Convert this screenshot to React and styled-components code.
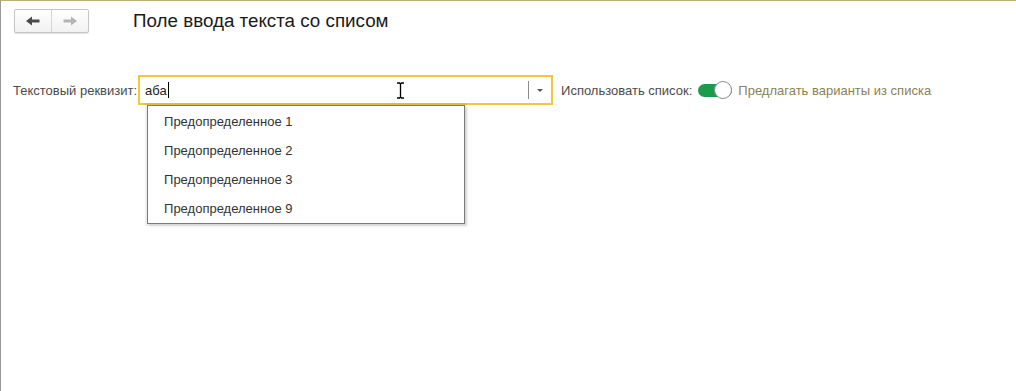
import React from "react";
import styled, { createGlobalStyle } from "styled-components";

const GlobalStyle = createGlobalStyle`
  html, body {
    margin: 0;
    padding: 0;
    background: #fff;
  }
  body {
    font-family: "Liberation Sans", Arial, sans-serif;
  }
`;

const items = [
  "Предопределенное 1",
  "Предопределенное 2",
  "Предопределенное 3",
  "Предопределенное 9",
];

const Arrow = ({ dir, color }) => (
  <svg width="14" height="10" viewBox="0 0 14 10">
    <g transform={dir === "right" ? "translate(14 0) scale(-1 1)" : undefined}>
      <path d="M0 5 L6 0.5 L6 3.5 L13.5 3.5 L13.5 6.5 L6 6.5 L6 9.5 Z" fill={color} />
    </g>
  </svg>
);

const IBeam = () => (
  <svg width="9" height="17" viewBox="0 0 9 17">
    <path
      d="M1 1 H3.5 L4.5 2 L5.5 1 H8 M4.5 2 V15 M1 16 H3.5 L4.5 15 L5.5 16 H8"
      fill="none"
      stroke="#000"
      strokeWidth="1.3"
    />
  </svg>
);

export default function App() {
  return (
    <>
      <GlobalStyle />
      <Page>
        <Header>
          <NavGroup>
            <NavButton>
              <Arrow dir="left" color="#4a4a4a" />
            </NavButton>
            <NavButton $divider>
              <Arrow dir="right" color="#b4b4b4" />
            </NavButton>
          </NavGroup>
          <Title>Поле ввода текста со списом</Title>
        </Header>

        <FormRow>
          <Label>Текстовый реквизит:</Label>
          <FieldWrap>
            <InputBox>
              <InputText>
                аба<Caret />
              </InputText>
              <DropButton>
                <DropTriangle />
              </DropButton>
            </InputBox>
            <Pointer>
              <IBeam />
            </Pointer>
            <DropList>
              {items.map((it) => (
                <DropItem key={it}>{it}</DropItem>
              ))}
            </DropList>
          </FieldWrap>
          <Label $gap>Использовать список:</Label>
          <Toggle>
            <Knob />
          </Toggle>
          <Hint>Предлагать варианты из списка</Hint>
        </FormRow>
      </Page>
    </>
  );
}

const Page = styled.div`
  height: 391px;
  box-sizing: border-box;
  border-top: 1px solid #bcb077;
  border-left: 1px solid #9a9a9a;
  overflow: hidden;
`;

const Header = styled.div`
  display: flex;
  align-items: center;
  padding: 8px 0 0 13px;
`;

const NavGroup = styled.div`
  display: flex;
  height: 22px;
  border: 1px solid #c6c6c6;
  border-radius: 2px;
  background: linear-gradient(#ffffff, #f1f1f1);
  box-shadow: 0 1px 1px rgba(0, 0, 0, 0.12);
`;

const NavButton = styled.div`
  width: 36px;
  display: flex;
  align-items: center;
  justify-content: center;
  border-left: ${(p) => (p.$divider ? "1px solid #d6d6d6" : "none")};
`;

const Title = styled.div`
  margin-left: 44px;
  font-size: 18.8px;
  color: #1a1a1a;
  line-height: 24px;
`;

const FormRow = styled.div`
  display: flex;
  align-items: center;
  margin-top: 42px;
  padding-left: 12px;
`;

const Label = styled.div`
  font-size: 13px;
  color: #4b4b4b;
  margin-left: ${(p) => (p.$gap ? "8px" : "0")};
  margin-right: ${(p) => (p.$gap ? "4px" : "1px")};
  white-space: nowrap;
`;

const FieldWrap = styled.div`
  position: relative;
`;

const InputBox = styled.div`
  width: 415px;
  height: 30px;
  box-sizing: border-box;
  border: 2px solid #f3c63d;
  display: flex;
  align-items: center;
  background: #fff;
`;

const InputText = styled.div`
  flex: 1;
  display: flex;
  align-items: center;
  padding-left: 5px;
  font-size: 13px;
  color: #222;
`;

const Caret = styled.span`
  display: inline-block;
  width: 1px;
  height: 16px;
  background: #000;
  margin-left: 1px;
`;

const DropButton = styled.div`
  width: 22px;
  height: 18px;
  border-left: 1px solid #8c8c8c;
  display: flex;
  align-items: center;
  justify-content: center;
`;

const DropTriangle = styled.div`
  width: 0;
  height: 0;
  border-left: 3px solid transparent;
  border-right: 3px solid transparent;
  border-top: 3px solid #555;
`;

const Pointer = styled.div`
  position: absolute;
  left: 258px;
  top: 7px;
  line-height: 0;
`;

const DropList = styled.div`
  position: absolute;
  left: 9px;
  top: 30px;
  width: 318px;
  box-sizing: border-box;
  border: 1px solid #7a7a7a;
  background: #fff;
  padding: 1px 0 0;
  box-shadow: 0 0 0 2px rgba(0, 0, 0, 0.06), 2px 2px 3px rgba(0, 0, 0, 0.12);
`;

const DropItem = styled.div`
  height: 29px;
  line-height: 29px;
  padding-left: 16px;
  font-size: 13px;
  color: #333;
`;

const Toggle = styled.div`
  width: 34px;
  height: 13px;
  margin: 0 6px 0 2px;
  border-radius: 7px;
  background: #1b9b4c;
  display: flex;
  align-items: center;
  justify-content: flex-end;
`;

const Knob = styled.div`
  width: 16px;
  height: 16px;
  border-radius: 50%;
  background: #fff;
  border: 1px solid #8e8e8e;
  flex-shrink: 0;
`;

const Hint = styled.div`
  font-size: 13px;
  color: #8c8156;
  white-space: nowrap;
`;
